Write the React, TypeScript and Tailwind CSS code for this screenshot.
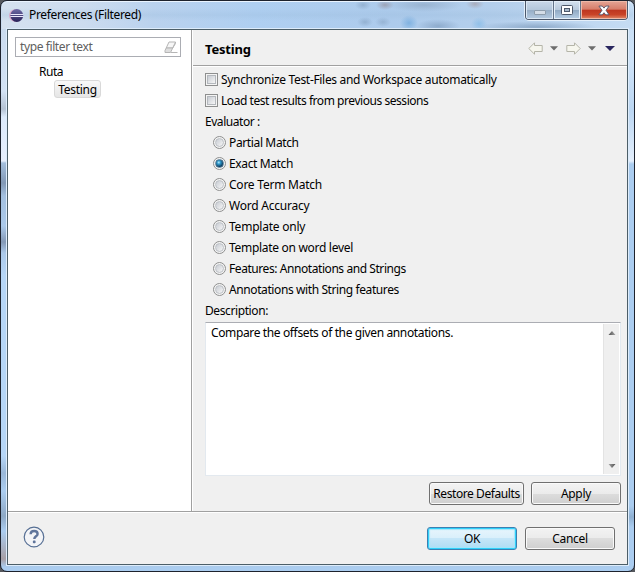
import type { ReactNode } from "react";

const EVALUATORS: { label: string; tracking: string }[] = [
  { label: "Partial Match", tracking: "tracking-[-0.37px]" },
  { label: "Exact Match", tracking: "tracking-[-0.37px]" },
  { label: "Core Term Match", tracking: "tracking-[-0.23px]" },
  { label: "Word Accuracy", tracking: "tracking-[-0.22px]" },
  { label: "Template only", tracking: "tracking-[-0.23px]" },
  { label: "Template on word level", tracking: "tracking-[-0.3px]" },
  { label: "Features: Annotations and Strings", tracking: "tracking-[-0.43px]" },
  { label: "Annotations with String features", tracking: "tracking-[-0.4px]" },
];

function Checkbox({ children }: { children: ReactNode }) {
  return (
    <div className="flex h-[21px] items-center gap-[3px]">
      <span className="flex size-[13px] items-center justify-center border border-[#8e8f8f] bg-[#f4f4f4]">
        <span className="size-[9px] border border-[#b4b8bd] bg-linear-to-br from-[#c8ccd3] to-[#f6f6f6]" />
      </span>
      {children}
    </div>
  );
}

function Radio({ checked }: { checked: boolean }) {
  return (
    <span className="flex size-[13px] items-center justify-center rounded-full border border-[#8e8f8f] bg-[#f4f4f4]">
      {checked ? (
        <span className="size-[9px] rounded-full border border-[#567a94] bg-[radial-gradient(circle_at_40%_35%,#b5ecff_0%,#2f97c9_28%,#0b3a5c_72%)]" />
      ) : (
        <span className="size-[9px] rounded-full border border-[#bcc0c5] bg-linear-to-br from-[#c8ccd3] to-[#f6f6f6]" />
      )}
    </span>
  );
}

function Button({ children, className }: { children: ReactNode; className: string }) {
  return (
    <button
      className={`h-[23px] rounded-[3px] border border-[#707070] bg-[linear-gradient(#f3f3f3_0%,#ebebeb_50%,#dddddd_50%,#cfcfcf_100%)] text-center leading-[19px] shadow-[inset_0_0_0_1px_#fafafa] ${className}`}
    >
      {children}
    </button>
  );
}

function EclipseLogo() {
  return (
    <svg width="15" height="15" viewBox="0 0 15 15">
      <defs>
        <linearGradient id="ecl" x1="0" y1="0" x2="0" y2="1">
          <stop offset="0" stopColor="#6d6aa5" />
          <stop offset="1" stopColor="#2a2359" />
        </linearGradient>
      </defs>
      <circle cx="6.3" cy="7.5" r="6.2" fill="#d9a5c5" />
      <circle cx="7.8" cy="7.5" r="6.4" fill="url(#ecl)" />
      <path d="M1.4 6.500h13M1.4 8.500h13" stroke="#e9e6fa" strokeWidth="1" />
    </svg>
  );
}

function NavArrow({ flip }: { flip?: boolean }) {
  return (
    <svg width="15" height="13" viewBox="0 0 15 13" className={flip ? "-scale-x-100" : ""}>
      <path
        d="M.8 6.500 6.500.8v2.700h7.700v6H6.500v2.700z"
        fill="#f6f6ee"
        stroke="#b4b4a8"
        strokeWidth="1"
        strokeLinejoin="round"
      />
    </svg>
  );
}

function Caret() {
  return (
    <svg width="8" height="5" viewBox="0 0 8 5">
      <path d="M0 .3h8L4 4.6z" fill="#6c6c6c" />
    </svg>
  );
}

function ScrollGlyph({ up }: { up?: boolean }) {
  return (
    <svg width="8" height="4" viewBox="0 0 7 4" className={up ? "" : "rotate-180"}>
      <defs>
        <linearGradient id={up ? "sgu" : "sgd"}>
          <stop offset="0" stopColor="#505050" />
          <stop offset="1" stopColor="#a5a5a5" />
        </linearGradient>
      </defs>
      <path d="M3.5 0 7 4H0z" fill={up ? "url(#sgu)" : "url(#sgd)"} />
    </svg>
  );
}

function CaptionButtons() {
  return (
    <div className="flex h-[19px] w-[103px] overflow-hidden rounded-b-[4px] border border-t-0 border-[#4b586b] shadow-[0_0_0_1px_#e4effa]">
      <div className="flex w-[28px] items-center justify-center border-r border-[#65758a] bg-[linear-gradient(#c9d8e9_0%,#b4c7db_48%,#96adc5_50%,#b5cbe1_100%)] shadow-[inset_0_0_0_1px_#dce8f4]">
        <svg width="12" height="5" viewBox="0 0 12 5" className="mt-[5px]">
          <rect x=".5" y=".5" width="11" height="4" rx=".5" fill="#d4dde7" stroke="#8e9dac" />
        </svg>
      </div>
      <div className="flex w-[27px] items-center justify-center border-r border-[#65758a] bg-[linear-gradient(#d5e2ef_0%,#b9cadd_48%,#8fa8c2_50%,#b7cfe6_100%)] shadow-[inset_0_0_0_1px_#e4eef8]">
        <svg width="12" height="10" viewBox="0 0 12 10">
          <rect x=".5" y=".5" width="11" height="9" rx="1" fill="#fff" stroke="#4e596b" />
          <rect x="3.5" y="3.5" width="5" height="3" fill="#a9bacb" stroke="#4e596b" />
        </svg>
      </div>
      <div className="flex flex-1 items-center justify-center bg-[linear-gradient(#e5a596_0%,#d77d69_46%,#bd3620_50%,#c94428_76%,#e28d6c_100%)] shadow-[inset_0_0_0_1px_#eeb9a8]">
        <svg width="12" height="11" viewBox="0 0 13 11">
          <path
            d="M1 .7h3.600l1.900 2.200L8.400.7H12L8.700 5.300 12 10.200H8.400L6.500 7.900l-1.900 2.300H1l3.300-4.900z"
            fill="#fff"
            stroke="#565468"
            strokeWidth="1"
          />
        </svg>
      </div>
    </div>
  );
}

export default function App() {
  return (
    <div className="h-[572px] w-[635px] bg-[#55585d] font-['Noto_Sans','Open_Sans',sans-serif] text-[12px] leading-[16px] tracking-[-0.3px] text-black">
      <div className="flex h-[572px] w-[635px] flex-col overflow-hidden rounded-[7px] border border-[#1d222d] [background:linear-gradient(#c5dcf3_0,#cfe3f8_60px,#bcd7f3_110px,#e4effc_160px,#abcdf0_163px,#abcdf0_505px,#8fb0d2_516px,#abcdf0_526px)_right/12px_100%_no-repeat,linear-gradient(#c6d8ec_0,#d3e2f4_90px,#b4c2d3_108px,#dceafb_116px,#e7effd_160px,#a3bedc_162px,#8298b5_182px,#a3c0e0_195px,#abc9ea_225px,#8499b6_241px,#abc9ea_252px,#b6d6f7_275px,#b6d6f7_455px,#9ab8d9_472px,#abcdf0_490px,#8ea9c6_515px,#abcdf0_530px,#a79fa5_558px,#abcdf0_566px)]">
        <header className="mx-px flex h-[28px] shrink-0 items-start justify-between rounded-t-[6px] border-t border-[#eaf4ff] bg-[radial-gradient(ellipse_22px_7px_at_436px_24px,#7f9dbfb0,transparent),radial-gradient(ellipse_60px_6px_at_535px_25px,#7c99bab0,transparent),radial-gradient(ellipse_9px_8px_at_407px_21px,#6ca7dcb0,transparent),radial-gradient(ellipse_8px_7px_at_477px_22px,#86bce8c0,transparent),radial-gradient(ellipse_8px_5px_at_363px_20px,#809dbd90,transparent),radial-gradient(ellipse_8px_5px_at_381px_20px,#809dbd80,transparent),radial-gradient(ellipse_8px_5px_at_361px_3px,#809dbd90,transparent),radial-gradient(ellipse_9px_5px_at_383px_3px,#94919fb0,transparent),radial-gradient(ellipse_38px_7px_at_422px_3px,#8ba4c0a0,transparent),radial-gradient(ellipse_9px_5px_at_473px_2px,#a59da6b0,transparent),linear-gradient(transparent_6px,#9bbcdc50_13px,transparent_19px),linear-gradient(90deg,#d5e1ef_0%,#ccdcef_13%,#bad2ee_24%,#afcff1_40%,#adcbec_62%,#b4cfec_78%,#c5dcf3_100%)]">
          <div className="flex h-[26px] items-center gap-[5px] pl-[7px]">
            <EclipseLogo />
            <span className="tracking-[-0.34px]">Preferences (Filtered)</span>
          </div>
          <div className="-mt-px mr-[5px]">
            <CaptionButtons />
          </div>
        </header>

        <main className="ml-[6px] flex h-[536px] w-[621px] shrink-0 flex-col border border-[#4c5e68] bg-[#f0f0f0] shadow-[0_0_0_1px_#ddecfb]">
          <div className="flex h-[481px] shrink-0">
            <aside className="w-[184px] shrink-0 border-r border-[#a0a0a0] bg-white pt-[7px] pl-[7px]">
              <div className="flex h-[20px] w-[166px] items-center justify-between border border-[#abadb3] pr-[2px] pl-[4px] text-[#606060]">
                <span className="tracking-[-0.4px]">type filter text</span>
                <svg width="14" height="13" viewBox="0 0 14 13" fill="none" stroke="#b5b5b5">
                  <path d="M5 1h6.500L8.700 7H2.200z" fill="#f6f6f6" />
                  <path d="M2.200 7h6.500L6.500 11.500H1V9.500z" fill="#dedede" />
                  <path d="M7 11.500h6.500M8.700 7l2.800-4.500V1" />
                </svg>
              </div>
              <div className="mt-[6px] flex h-[17px] items-center pl-[24px] tracking-[-0.45px]">Ruta</div>
              <div className="ml-[39px] flex h-[18px] w-[47px] items-center justify-center rounded-[3px] border border-[#d9d9d9] bg-linear-to-b from-[#f8f8f8] to-[#e6e6e6] pt-px">
                Testing
              </div>
            </aside>

            <section className="flex flex-1 flex-col border-l border-white">
              <div className="flex h-[36px] shrink-0 items-center justify-between border-b border-[#a0a0a0] pt-[2px] pr-[12px] pl-[12px]">
                <h1 className="text-[13px] font-bold tracking-[-0.2px]">Testing</h1>
                <div className="flex items-center">
                  <NavArrow />
                  <span className="ml-[7px] flex">
                    <Caret />
                  </span>
                  <span className="ml-[8px] flex">
                    <NavArrow flip />
                  </span>
                  <span className="ml-[7px] flex">
                    <Caret />
                  </span>
                  <svg width="10" height="5" viewBox="0 0 10 5" className="ml-[9px]">
                    <path d="M0 0h10L5 5z" fill="#29265f" />
                  </svg>
                </div>
              </div>

              <div className="border-t border-white pt-[2px] pl-[12px]">
                <Checkbox>
                  <span className="tracking-[-0.32px]">
                    Synchronize Test-Files and Workspace automatically
                  </span>
                </Checkbox>
                <Checkbox>
                  <span className="tracking-[-0.45px]">Load test results from previous sessions</span>
                </Checkbox>
                <div className="flex h-[21px] items-center tracking-[-0.45px]">Evaluator :</div>
                {EVALUATORS.map((e, i) => (
                  <label key={e.label} className="flex h-[21px] items-center gap-[3px] pl-[8px]">
                    <Radio checked={i === 1} />
                    <span className={e.tracking}>{e.label}</span>
                  </label>
                ))}
                <div className="flex h-[21px] items-center tracking-[-0.4px]">Description:</div>
                <div className="mt-px flex h-[154px] w-[416px] justify-between border border-[#e3e9ef] border-t-[#abadb3] bg-white p-px">
                  <p className="pt-[1px] pl-[4px] tracking-[-0.37px]">
                    Compare the offsets of the given annotations.
                  </p>
                  <div className="flex w-[16px] flex-col items-center justify-between border-l border-[#e3e3e3] bg-[#efefef] pt-[7px] pb-[6px]">
                    <ScrollGlyph up />
                    <ScrollGlyph />
                  </div>
                </div>
                <div className="mt-[6px] flex justify-end gap-[7px] pr-[6px]">
                  <Button className="w-[95px] tracking-[-0.42px]">Restore Defaults</Button>
                  <Button className="w-[90px]">Apply</Button>
                </div>
              </div>
            </section>
          </div>

          <footer className="flex flex-1 justify-between border-t border-[#a0a0a0] pt-[15px] pr-[12px] pl-[15px] shadow-[inset_0_1px_0_#fff]">
            <svg width="22" height="22" viewBox="0 0 22 22" className="-mt-px">
              <circle cx="11" cy="11" r="9.800" fill="#f3f4f7" stroke="#566f94" strokeWidth="1.200" />
              <path
                d="M7.600 8.300C7.700 6 9.100 5 11.100 5c2 0 3.500 1.100 3.500 2.900 0 2.400-3.300 2.400-3.300 5"
                fill="none"
                stroke="#60759b"
                strokeWidth="2.400"
              />
              <rect x="9.900" y="14.600" width="2.700" height="2.600" rx=".8" fill="#60759b" />
            </svg>
            <div className="flex gap-[8px]">
              <button className="h-[23px] w-[90px] rounded-[3px] border border-[#3c7fb1] bg-[linear-gradient(#e8f5fc_0%,#d9effb_50%,#c5e6f8_50%,#aedcf3_100%)] text-center leading-[19px] shadow-[inset_0_0_0_1px_#2fd0fa,inset_0_0_1px_2px_#a5e6fb]">
                OK
              </button>
              <Button className="w-[90px]">Cancel</Button>
            </div>
          </footer>
        </main>
      </div>
    </div>
  );
}
